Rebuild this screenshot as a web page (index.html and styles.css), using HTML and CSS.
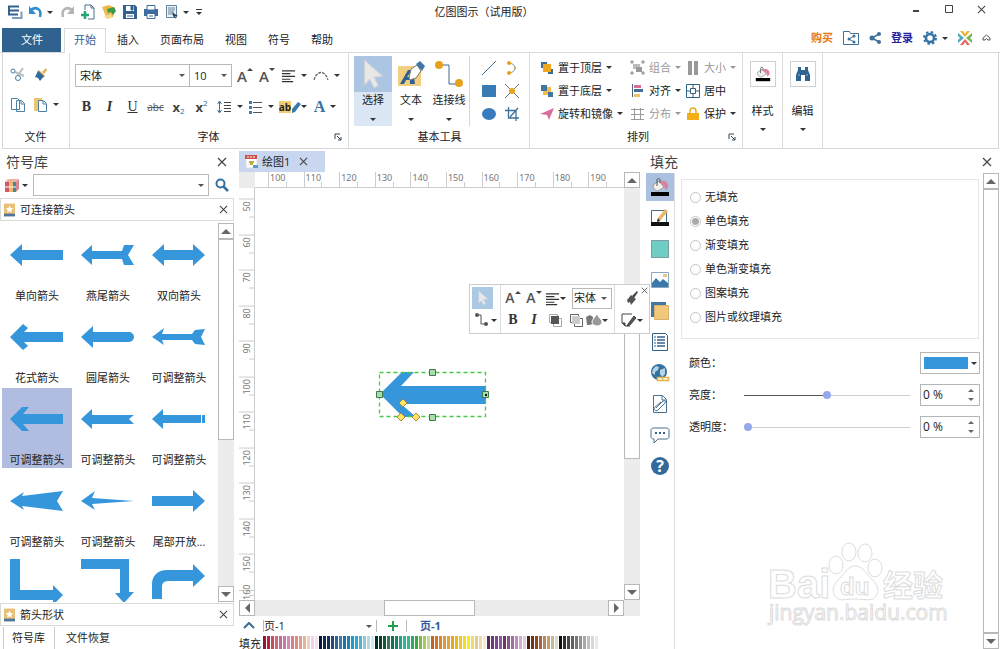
FILE: index.html
```
<!DOCTYPE html>
<html lang="zh-CN">
<head>
    <meta charset="UTF-8">
    <meta name="viewport" content="width=device-width, initial-scale=1.0">
    <title>亿图图示（试用版）</title>
    <link rel="stylesheet" href="styles.css">
</head>
<body>
    <svg class="sprite" aria-hidden="true">
        <symbol id="i-close" viewBox="0 0 10 10"><path d="M1 1l8 8M9 1L1 9" fill="none" stroke="#444" stroke-width="1.2"/></symbol>
        <symbol id="i-lines" viewBox="0 0 16 16"><path d="M1 3h14M1 6h9M1 9h14M1 12h9M1 14.500h12" stroke="#333" stroke-width="1.300"/></symbol>
        <symbol id="i-bucket" viewBox="0 0 20 20">
            <path d="M11 4c5-1 8 2 7 7l-3 2c0-3-1-5-4-6z" fill="#dc7fa0"/>
            <path d="M3 8l6-4 5 6-6 4c-3 0-5-3-5-6z" fill="#f2efec" stroke="#999"/>
            <path d="M7 9V3c0-2 3-2 3 0v3" fill="none" stroke="#555"/>
            <path d="M1 15h18v4H1z" fill="#000"/>
        </symbol>
        <symbol id="i-star" viewBox="0 0 12 14"><path d="M0 0h12v12H0z" fill="#e9c077"/><path d="M0 11h12v3H0z" fill="#4d7599"/><path d="M6 2l1.200 2.800 3 .2-2.300 2 .7 3L6 8.400 3.400 10l.7-3-2.300-2 3-.2z" fill="#fff"/></symbol>
        <symbol id="i-launch" viewBox="0 0 8 8"><path d="M1 6V1h5M3 3l4 4M7 4v3H4" fill="none" stroke="#345"/></symbol>
        <symbol id="i-pointer" viewBox="0 0 24 30"><path d="M4 2l17 15-8 1 4 8-4 2-4-8-5 5z" fill="#e8e8e8" stroke="#cfd3d8"/></symbol>
    </svg>

    <header class="titlebar">
        <div class="quick">
            <button aria-label="系统"><svg width="16" height="16" viewBox="0 0 16 16"><path d="M1 2.500h11M1 6.500h11M1 10.500h10M2 2v9" stroke="#33628f" stroke-width="2" fill="none"/><path d="M5 14h9.500V7.500" stroke="#7c9dbd" stroke-width="2" fill="none"/></svg></button>
            <button class="wide" aria-label="撤销"><svg width="16" height="16" viewBox="0 0 16 16"><path d="M3 6c5-4 11-1 9 7" fill="none" stroke="#2f8ecb" stroke-width="2.500"/><path d="M1 2v8h7z" fill="#2f8ecb"/></svg><i class="caret"></i></button>
            <button aria-label="恢复"><svg width="16" height="16" viewBox="0 0 16 16"><path d="M13 6C8 2 2 5 4 13" fill="none" stroke="#b5b5b5" stroke-width="2.500"/><path d="M15 2v8H8z" fill="#b5b5b5"/></svg></button>
            <button aria-label="新建"><svg width="16" height="16" viewBox="0 0 16 16"><path d="M5 6V1h6l3 3v11H8" fill="#fff" stroke="#4d6f8c"/><path d="M11 1v3h3" fill="none" stroke="#4d6f8c"/><path d="M5 7v8M1 11h8" stroke="#1fa774" stroke-width="2.500"/></svg></button>
            <button aria-label="打开"><svg width="16" height="16" viewBox="0 0 16 16"><path d="M1 3l7-2 6 3-2 9-6 2z" fill="#eeb84c"/><path d="M6 5l7-2 2 4-3 4-2-3-3 1z" fill="#3c9a48"/><path d="M3 12l7-2 1 3-5 2z" fill="#f7d98b"/></svg></button>
            <button aria-label="保存"><svg width="16" height="16" viewBox="0 0 16 16"><path d="M1 1h12l2 2v12H1z" fill="#33628f"/><path d="M4 2h8v5H4zM4 10h8v4H4z" fill="#fff"/><path d="M9 2h2v4H9zM5 12h6" fill="#33628f" stroke="#33628f"/></svg></button>
            <button aria-label="打印"><svg width="16" height="16" viewBox="0 0 16 16"><path d="M1 5h14v7H1z" fill="#3c6c9d"/><path d="M4 1.500h8V6H4zM4 9.500h8v5H4z" fill="#fff" stroke="#3c6c9d"/><path d="M6 12h4" stroke="#3c6c9d"/></svg></button>
            <button class="wide" aria-label="预览"><svg width="16" height="16" viewBox="0 0 16 16"><path d="M2.500 1.500h10v12h-10z" fill="#edf2f6" stroke="#64839c"/><path d="M4 4h7M4 6h7M4 8h6M4 10h4" stroke="#64839c"/><path d="M8 8l6 4-3 .5 1 2.500-3-3z" fill="#24476b"/></svg><i class="caret"></i></button>
            <button class="more" aria-label="更多"><i class="caret"></i></button>
        </div>
        <div class="title">亿图图示（试用版）</div>
        <div class="window-buttons">
            <button aria-label="最小化"><svg width="10" height="10" viewBox="0 0 10 10"><path d="M2 7h6" stroke="#444" stroke-width="2"/></svg></button>
            <button aria-label="最大化"><svg width="10" height="10" viewBox="0 0 10 10"><path d="M1.500 1.500h7v7h-7z" fill="none" stroke="#444"/></svg></button>
            <button aria-label="关闭"><svg width="9" height="9"><use href="#i-close"/></svg></button>
        </div>
    </header>

    <nav class="menu">
        <a class="file" href="#">文件</a>
        <a class="active" href="#">开始</a>
        <a href="#">插入</a>
        <a href="#">页面布局</a>
        <a href="#">视图</a>
        <a href="#">符号</a>
        <a href="#">帮助</a>
        <div class="account">
            <a class="buy" href="#">购买</a>
            <button aria-label="共享文件夹"><svg width="16" height="14" viewBox="0 0 16 14"><path d="M.5 13.500v-13h6l1 2h8v11z" fill="none" stroke="#3e7099"/><path d="M11 5L6 8l5 3" fill="none" stroke="#3e7099"/><g fill="#3e7099"><circle cx="11" cy="5" r="1.500"/><circle cx="6" cy="8" r="1.500"/><circle cx="11" cy="11" r="1.500"/></g></svg></button>
            <button aria-label="分享"><svg width="12" height="14" viewBox="0 0 12 14"><path d="M10 3L3 7l7 4" fill="none" stroke="#3e7099" stroke-width="1.500"/><g fill="#3e7099"><circle cx="10" cy="3" r="2"/><circle cx="3" cy="7" r="2.500"/><circle cx="10" cy="11" r="2"/></g></svg></button>
            <a class="login" href="#">登录</a>
            <button aria-label="设置"><svg width="14" height="14" viewBox="0 0 14 14"><circle cx="7" cy="7" r="4" fill="none" stroke="#3272a5" stroke-width="2.500"/><circle cx="7" cy="7" r="6" fill="none" stroke="#3272a5" stroke-width="2" stroke-dasharray="2.400 2.312"/></svg><i class="caret"></i></button>
            <button aria-label="主页"><svg width="14" height="14" viewBox="0 0 14 14"><path d="M2 0h3l2 3 2-3h3L7 6z" fill="#efaf2d"/><path d="M0 2l6 5-6 5V9l2-2-2-2z" fill="#53a7bd"/><path d="M14 2L8 7l6 5V9l-2-2 2-2z" fill="#78b64a"/><path d="M2 14l5-6 5 6H9l-2-3-2 3z" fill="#e8605a"/></svg></button>
            <button aria-label="收起"><svg width="9" height="8" viewBox="0 0 9 8"><path d="M1 4l3.500-3L8 4v2H6L4.500 4.500 3 6H1z" fill="none" stroke="#555"/></svg></button>
        </div>
    </nav>

    <section class="ribbon">
        <div class="group clipboard">
            <div class="clip-tools">
                <button aria-label="剪切"><svg width="16" height="16" viewBox="0 0 16 16"><path d="M5 6l9 4M8 9l5-7" stroke="#b4bdc4" stroke-width="2"/><circle cx="3" cy="5" r="2" fill="none" stroke="#4a7da5"/><circle cx="8" cy="12" r="2.500" fill="none" stroke="#4a7da5"/></svg></button>
                <button aria-label="格式刷"><svg width="16" height="16" viewBox="0 0 16 16"><path d="M9 6l4-4 1 2-3 4z" fill="#e4ae50"/><path d="M6 4l6 6-2 2-6-6z" fill="#dca543"/><path d="M5 5l6 5-4 5-2-3-3-1z" fill="#316ca0"/></svg></button>
                <button aria-label="复制"><svg width="16" height="16" viewBox="0 0 16 16"><path d="M1.500 1.500h6l2 2v9h-8zM6.500 3.500h5l3 3v8h-8z" fill="#fff" stroke="#4d80a3"/><path d="M11 4v3h3" fill="none" stroke="#4d80a3"/></svg></button>
                <button aria-label="粘贴"><svg width="16" height="16" viewBox="0 0 16 16"><path d="M1 1h8v13H1z" fill="#ecc474"/><path d="M5.500 3.500h5l3 3v8h-8z" fill="#fff" stroke="#4d80a3"/><path d="M10 4v3h3" fill="none" stroke="#4d80a3"/></svg><i class="caret"></i></button>
            </div>
            <h2>文件</h2>
        </div>

        <div class="group font">
            <div class="font-row">
                <span class="combo family"><select aria-label="字体"><option>宋体</option></select></span>
                <span class="combo size"><select aria-label="字号"><option>10</option></select></span>
                <button class="glyph" aria-label="增大字号">A<i class="up"></i></button>
                <button class="glyph" aria-label="减小字号">A<i class="down"></i></button>
                <button class="drop" aria-label="对齐"><svg width="15" height="15"><use href="#i-lines"/></svg><i class="caret"></i></button>
                <button class="drop" aria-label="曲线文字"><svg width="16" height="12" viewBox="0 0 16 12"><path d="M1 10C4 0 12 0 15 10" fill="none" stroke="#666" stroke-width="1.300" stroke-dasharray="3 1"/></svg><i class="caret"></i></button>
            </div>
            <div class="font-row second">
                <button class="serif"><b>B</b></button>
                <button class="serif"><b><em>I</em></b></button>
                <button class="serif"><u>U</u></button>
                <button class="strike"><s>abc</s></button>
                <button class="script"><b>x</b><sub>2</sub></button>
                <button class="script"><b>x</b><sup>2</sup></button>
                <button class="drop" aria-label="行距"><svg width="16" height="14" viewBox="0 0 16 14"><path d="M3.500 2v10M1.500 4l2-3 2 3M1.500 10l2 3 2-3" fill="none" stroke="#3f7198"/><path d="M8 2.500h7M8 5.500h7M8 8.500h7M8 11.500h7" stroke="#444"/></svg><i class="caret"></i></button>
                <button class="drop" aria-label="项目符号"><svg width="15" height="14" viewBox="0 0 15 14"><path d="M5 2.500h9M5 7.500h9M5 12.500h9" stroke="#555"/><path d="M1 1h3v3H1zM1 6h3v3H1zM1 11h3v3H1z" fill="#3f7ba9"/></svg><i class="caret"></i></button>
                <button class="drop mark" aria-label="突出显示"><span>ab</span><svg width="10" height="14" viewBox="0 0 10 14"><path d="M1 9l6-7 3 2-6 8-3 1z" fill="#3c78aa"/></svg><i class="caret"></i></button>
                <button class="drop serif color">A<i class="caret"></i></button>
            </div>
            <h2>字体</h2>
            <button class="launcher" aria-label="字体设置"><svg width="8" height="8"><use href="#i-launch"/></svg></button>
        </div>

        <div class="group tools">
            <div class="tool-row">
                <button class="big selected"><span class="pic"><svg width="30" height="32"><use href="#i-pointer"/></svg></span>选择<i class="caret"></i></button>
                <button class="big"><span class="pic"><svg width="27" height="27" viewBox="0 0 27 27"><path d="M0 5h23v20H0z" fill="#f2ce83"/><path d="M2 23L10 9h5l2 14h-5v-4H8l-2 4zM9 16h4l-1-4z" fill="#2d618f" fill-rule="evenodd"/><path d="M11 17l2-9 6-4 4 6-5 7-6 2z" fill="#fff" stroke="#777"/><path d="M18 3l4-3 5 5-3 5z" fill="#4178a5"/></svg></span>文本<i class="caret"></i></button>
                <button class="big"><span class="pic"><svg width="28" height="28" viewBox="0 0 28 28"><path d="M4 5h10v19h10" fill="none" stroke="#3b6b93"/><circle cx="4" cy="5" r="4" fill="#e8a11d"/><circle cx="24" cy="23" r="4" fill="#e8a11d"/></svg></span>连接线<i class="caret"></i></button>
                <div class="shapes">
                    <button aria-label="直线"><svg width="16" height="16" viewBox="0 0 16 16"><path d="M1 15L15 1" stroke="#47729a"/></svg></button>
                    <button aria-label="弧线"><svg width="16" height="16" viewBox="0 0 16 16"><path d="M5 3c8 1 8 9 0 10" fill="none" stroke="#63869f"/><circle cx="5" cy="3" r="2" fill="#e8a11d"/><circle cx="5" cy="13" r="2" fill="#e8a11d"/><circle cx="11" cy="8" r="1" fill="#e8a11d"/></svg></button>
                    <button aria-label="矩形"><svg width="16" height="16" viewBox="0 0 16 16"><path d="M1 2h14v12H1z" fill="#397bb3"/></svg></button>
                    <button aria-label="连接点"><svg width="16" height="16" viewBox="0 0 16 16"><path d="M1 1l14 14M15 1L1 15" stroke="#547995"/><circle cx="8" cy="8" r="3" fill="#e8a11d"/></svg></button>
                    <button aria-label="椭圆"><svg width="16" height="16" viewBox="0 0 16 16"><ellipse cx="8" cy="8" rx="7" ry="6" fill="#397bbf"/></svg></button>
                    <button aria-label="裁剪"><svg width="16" height="16" viewBox="0 0 16 16"><path d="M4.500 1v11H15M1 4.500h11V15M6 11l8-9" fill="none" stroke="#3e7199" stroke-width="1.300"/></svg></button>
                </div>
            </div>
            <h2>基本工具</h2>
        </div>

        <div class="group arrange">
            <div class="arrange-grid">
                <button><svg width="14" height="14" viewBox="0 0 14 14"><path d="M1 1h6v6H1zM8 8h5v5H8z" fill="#406b91"/><path d="M3 3h8v8H3z" fill="#f0a71c"/></svg>置于顶层<i class="caret"></i></button>
                <button class="off"><svg width="15" height="15" viewBox="0 0 15 15"><path d="M1 1h2v2H1zM12 1h2v2h-2zM1 12h2v2H1zM12 12h2v2h-2z" fill="none" stroke="#888"/><path d="M3 4h7v5H3z" fill="#bbb"/><path d="M6 7h6v5H6z" fill="#999"/></svg>组合<i class="caret"></i></button>
                <button class="off"><svg width="14" height="14" viewBox="0 0 14 14"><path d="M2 0h4v14H2zM8 0h4v14H8z" fill="#999"/></svg>大小<i class="caret"></i></button>
                <button><svg width="14" height="14" viewBox="0 0 14 14"><path d="M3 3h8v8H3z" fill="#f3bd4b"/><path d="M1 1h6v6H1zM8 8h5v5H8z" fill="#3e76a4"/></svg>置于底层<i class="caret"></i></button>
                <button><svg width="15" height="15" viewBox="0 0 15 15"><path d="M2.500 1v13" stroke="#446683"/><path d="M4 2h7v3H4z" fill="#dc6f99"/><path d="M4 6h9v3H4z" fill="#416f95"/><path d="M4 11h6v3H4z" fill="#efc167"/></svg>对齐<i class="caret"></i></button>
                <button><svg width="14" height="14" viewBox="0 0 14 14"><path d="M.5.5h13v13H.5zM4.500 4.500h5v5h-5zM7 1v3M7 10v3M1 7h3M10 7h3" fill="none" stroke="#2f6285"/></svg>居中</button>
                <button><svg width="14" height="14" viewBox="0 0 14 14"><path d="M0 7l14-6-5 12-2-5z" fill="#da6f9c"/></svg>旋转和镜像<i class="caret"></i></button>
                <button class="off"><svg width="15" height="14" viewBox="0 0 15 14"><path d="M1 2.500h13M1 7.500h13M1 12.500h13M4.500 1v12M10.500 1v12" stroke="#999" fill="none"/></svg>分布<i class="caret"></i></button>
                <button><svg width="14" height="14" viewBox="0 0 14 14"><path d="M4 7V4c0-4 6-4 6 0v3" fill="none" stroke="#e6a921" stroke-width="1.500"/><path d="M1 6h12v7H1z" fill="#f3ae17"/></svg>保护<i class="caret"></i></button>
            </div>
            <h2>排列</h2>
            <button class="launcher" aria-label="排列设置"><svg width="8" height="8"><use href="#i-launch"/></svg></button>
        </div>

        <button class="group tall"><span class="box"><svg width="18" height="16"><use href="#i-bucket"/></svg></span>样式<i class="caret"></i></button>
        <button class="group tall"><span class="box"><svg width="16" height="16" viewBox="0 0 16 16"><path d="M3 1h3v3h4V1h3v3l2 5v6h-5v-6H6v6H1V9l2-5z" fill="#2d6492"/><path d="M3 9h2M11 9h2" stroke="#9bb8ce"/></svg></span>编辑<i class="caret"></i></button>
    </section>

    <main>
        <aside class="library">
            <header class="panel-title"><h1>符号库</h1><button aria-label="关闭符号库"><svg width="10" height="10"><use href="#i-close"/></svg></button></header>
            <div class="search">
                <button aria-label="符号库列表"><svg width="14" height="15" viewBox="0 0 14 15"><path d="M0 4l3-3h11l-3 3z" fill="#efb0a0"/><path d="M0 4h4v10H0z" fill="#d0596a"/><path d="M4 4h4v10H4z" fill="#edbb62"/><path d="M8 4h3v10H8z" fill="#4b82aa"/><path d="M11 4l3-3v10l-3 3z" fill="#da8590"/><path d="M0 9h11" stroke="#fff"/></svg><i class="caret"></i></button>
                <span class="combo"><input type="text" aria-label="搜索符号"></span>
                <button aria-label="搜索"><svg width="14" height="14" viewBox="0 0 14 14"><circle cx="5.500" cy="5.500" r="4" fill="none" stroke="#34719f" stroke-width="2"/><path d="M8.500 8.500l4.500 4.500" stroke="#34719f" stroke-width="2.500"/></svg></button>
            </div>
            <div class="section"><svg width="11" height="14"><use href="#i-star"/></svg><span>可连接箭头</span><button aria-label="关闭可连接箭头"><svg width="9" height="9"><use href="#i-close"/></svg></button></div>
            <div class="shelf">
                <div class="symbols">
                    <button><svg viewBox="0 -17 54 60"><path d="M0 14L12 3v6h41v10H12v6z"/></svg>单向箭头</button>
                    <button><svg viewBox="0 -17 54 60"><path d="M0 14L11 4v6h30l2-6h10l-6 10 6 10H43l-2-6H11v6z"/></svg>燕尾箭头</button>
                    <button><svg viewBox="0 -17 54 60"><path d="M0 14L12 3v6h29V3l12 11-12 11v-6H12v6z"/></svg>双向箭头</button>
                    <button><svg viewBox="0 -17 54 60"><path d="M0 14L13 1l5 4-4 4h39v10H14l4 4-5 4z"/></svg>花式箭头</button>
                    <button><svg viewBox="0 -17 54 60"><path d="M0 14L12 3v6h36a5 5 0 0 1 0 10H12v6z"/></svg>圆尾箭头</button>
                    <button><svg viewBox="0 -17 54 60"><path d="M0 14l12-9-2 6h30l3-4 10-1-4 8 4 8-10-1-3-4H10l2 5z"/></svg>可调整箭头</button>
                    <button class="selected"><svg viewBox="0 -17 54 60"><path d="M0 14L12 2h7l-6 7h40v10H13l6 7h-7z"/></svg>可调整箭头</button>
                    <button><svg viewBox="0 -17 54 60"><path d="M0 14L11 4v6h42l-5 4 5 5H11v5z"/></svg>可调整箭头</button>
                    <button><svg viewBox="0 -17 54 60"><path d="M0 14L11 4v6h38v8H11v6zM50 10h3v8h-3z"/></svg>可调整箭头</button>
                    <button><svg viewBox="0 -17 54 60"><path d="M0 14L14 5l-2 4 41-5-6 10 6 10-41-5 2 4z"/></svg>可调整箭头</button>
                    <button><svg viewBox="0 -17 54 60"><path d="M0 14L14 4l-3 7 42 3-42 3 3 6z"/></svg>可调整箭头</button>
                    <button><svg viewBox="0 -17 54 60"><path d="M0 9h41V3l12 11-12 11v-6H0z"/></svg>尾部开放...</button>
                    <button aria-label="直角箭头"><svg viewBox="0 -17 54 60"><path d="M0-10h10v31h33v-5l10 10-10 10v-5H0z"/></svg></button>
                    <button aria-label="下折箭头"><svg viewBox="0 -17 54 60"><path d="M0-10h48v33h5L43 34 34 24h5V0H0z"/></svg></button>
                    <button aria-label="圆角箭头"><svg viewBox="0 -17 54 60"><path d="M0 30V14C1 5 7 1 15 1h26v-6L53 7 41 18v-6H17c-5 0-7 2-7 6v12z"/></svg></button>
                </div>
                <div class="vbar lib-bar"><button aria-label="上"><i class="tri t-up"></i></button><span></span><button aria-label="下"><i class="tri t-down"></i></button></div>
            </div>
            <div class="section"><svg width="11" height="14"><use href="#i-star"/></svg><span>箭头形状</span><button aria-label="关闭箭头形状"><svg width="9" height="9"><use href="#i-close"/></svg></button></div>
            <div class="lib-tabs"><a class="on" href="#">符号库</a><a href="#">文件恢复</a></div>
        </aside>

        <section class="editor">
            <div class="doc-tabs">
                <div class="doc-tab"><svg width="14" height="14" viewBox="0 0 14 14"><path d="M1 1h11v12H1z" fill="#fff" stroke="#ddd"/><path d="M0 0h12v4H0z" fill="#c9504c"/><path d="M2 2h2M5 2h2M8 2h2" stroke="#fff"/><path d="M4 6h5v2H8v2H5V8H4z" fill="#c1ad3f"/><path d="M8 10h5v3H8z" fill="#579bc7"/></svg><span>绘图1</span><button aria-label="关闭绘图"><svg width="9" height="9"><use href="#i-close"/></svg></button></div>
            </div>
            <div class="stage">
                <div class="corner"></div>
                <div class="ruler-h" id="ruler-h"></div>
                <div class="ruler-v" id="ruler-v"></div>
                <div class="canvas">
                    <svg class="shape" width="116" height="54" viewBox="0 0 116 54">
                        <path d="M5 26L27 4h12L26 18h85v18H26l15 13H28z" fill="#3596dc"/>
                        <path d="M4.500 4.500h106v44H4.500z" fill="none" stroke="#48c848" stroke-width="1.300" stroke-dasharray="4 3"/>
                        <g fill="#a6dcb0" stroke="#3f7a4c"><path d="M1.500 23.500h6v6h-6zM54.500 1.500h6v6h-6zM54.500 46.500h6v6h-6zM107.500 23.500h6v6h-6z"/></g>
                        <path d="M110 26h2v2h-2z" fill="#111"/>
                        <path d="M28 31l4 4-4 4-4-4zM26 45l4 4-4 4-4-4zM41 45l4 4-4 4-4-4z" fill="#ffe36b" stroke="#a8892f"/>
                    </svg>
                </div>
                <div class="vbar page-bar"><button aria-label="上"><i class="tri t-up"></i></button><span></span><button aria-label="下"><i class="tri t-down"></i></button></div>
                <div class="hbar"><button aria-label="左"><i class="tri t-left"></i></button><span></span><button aria-label="右"><i class="tri t-right"></i></button></div>
            </div>
            <div class="pages">
                <button aria-label="展开"><svg width="12" height="8" viewBox="0 0 12 8"><path d="M1 6l5-5 5 5" fill="none" stroke="#356b96" stroke-width="2"/></svg></button>
                <span class="combo"><select aria-label="页面"><option>页-1</option></select></span>
                <button class="add" aria-label="添加页面"><svg width="12" height="12" viewBox="0 0 12 12"><path d="M6 1v10M1 6h10" stroke="#1ca052" stroke-width="2"/></svg></button>
                <a href="#">页-1</a>
            </div>
            <div class="palette"><span>填充</span><div class="swatches" id="swatches"></div></div>

            <div class="floating">
                <div class="f-col">
                    <button class="on" aria-label="选择"><svg width="14" height="16"><use href="#i-pointer"/></svg></button>
                    <button aria-label="连接线"><svg width="16" height="14" viewBox="0 0 16 14"><path d="M3 2h4v9h5" fill="none" stroke="#555"/><circle cx="3" cy="2" r="2" fill="#555"/><circle cx="12" cy="11" r="2" fill="#555"/></svg><i class="caret"></i></button>
                </div>
                <div class="f-col mid">
                    <div>
                        <button class="glyph" aria-label="增大字号">A<i class="up"></i></button>
                        <button class="glyph" aria-label="减小字号">A<i class="down"></i></button>
                        <button aria-label="对齐"><svg width="15" height="15"><use href="#i-lines"/></svg><i class="caret"></i></button>
                        <span class="combo"><select aria-label="字体"><option>宋体</option></select></span>
                    </div>
                    <div>
                        <button class="serif"><b>B</b></button>
                        <button class="serif"><b><em>I</em></b></button>
                        <button aria-label="置于顶层"><svg width="14" height="14" viewBox="0 0 14 14"><path d="M1.500 1.500h8v8h-8zM5.500 5.500h8v8h-8z" fill="#fff" stroke="#aaa"/><path d="M3 3h8v8H3z" fill="#555"/></svg></button>
                        <button aria-label="置于底层"><svg width="14" height="14" viewBox="0 0 14 14"><path d="M1.500 1.500h8v8h-8zM5.500 5.500h8v8h-8z" fill="#fff" stroke="#666"/><path d="M3 3h8v8H3z" fill="#ccc"/></svg></button>
                        <button aria-label="填充"><svg width="16" height="14" viewBox="0 0 16 14"><path d="M0 4l4-2 3 2v7l-4 1H1z" fill="#777"/><path d="M11 1c3 5 5 6 5 8s-2 4-5 4-5-2-5-4 2-4 5-8z" fill="#999" stroke="#fff"/></svg><i class="caret"></i></button>
                    </div>
                </div>
                <div class="f-col">
                    <button aria-label="格式刷"><svg width="14" height="14" viewBox="0 0 14 14"><path d="M7 5l5-5 1 1-4 6z" fill="#444"/><path d="M6 4l5 4-5 6-1-3-2 1-1-3z" fill="#555"/></svg></button>
                    <button aria-label="线条"><svg width="15" height="14" viewBox="0 0 15 14"><path d="M11 1H1v9l3 3h5" fill="none" stroke="#444"/><path d="M1 10h3v3M13 3l-6 8-1 2 3-1 6-7z" fill="#555" stroke="#444"/></svg><i class="caret"></i></button>
                </div>
                <button class="f-close" aria-label="关闭工具栏"><svg width="7" height="7"><use href="#i-close"/></svg></button>
            </div>
        </section>

        <aside class="props">
            <header class="panel-title"><h1>填充</h1><button aria-label="关闭填充"><svg width="10" height="10"><use href="#i-close"/></svg></button></header>
            <div class="props-body">
                <div class="strip">
                    <button class="on" aria-label="填充"><svg width="20" height="20"><use href="#i-bucket"/></svg></button>
                    <button aria-label="线条"><svg width="20" height="20" viewBox="0 0 20 20"><path d="M1.500 2.500h15v12h-15z" fill="#fff" stroke="#446a8a"/><path d="M15 1l3 2-8 10-3 1 1-4z" fill="#e7b965"/><path d="M8 10l2 3-3 1z" fill="#222"/><path d="M1 14h18v4H1z" fill="#111"/></svg></button>
                    <button aria-label="阴影"><svg width="20" height="20" viewBox="0 0 20 20"><path d="M1.500 1.500h17v17h-17z" fill="#70cdc3" stroke="#7b9ca0"/></svg></button>
                    <button aria-label="图片"><svg width="20" height="20" viewBox="0 0 20 20"><path d="M1.500 2.500h17v15h-17z" fill="#fff" stroke="#8aa7be"/><path d="M2 13l4-5 4 4 3-3 5 4v4H2z" fill="#3b78ab"/><path d="M13 4h4v3h-4z" fill="#e9c68f"/></svg></button>
                    <button aria-label="图层"><svg width="20" height="20" viewBox="0 0 20 20"><path d="M1 1h15v15H1z" fill="#4276a4"/><path d="M4.500 4.500h14v14h-14z" fill="#f1c77a" stroke="#d7b06b"/></svg></button>
                    <button aria-label="属性"><svg width="20" height="20" viewBox="0 0 20 20"><path d="M2.500 1.500h13l2 2v15h-15z" fill="#fff" stroke="#34638a"/><path d="M7 5h8M7 8h8M7 11h8M7 14h8" stroke="#34638a" stroke-width="1.500"/><path d="M4 5h2M4 8h2M4 11h2M4 14h2" stroke="#34638a"/></svg></button>
                    <button aria-label="超链接"><svg width="20" height="20" viewBox="0 0 20 20"><circle cx="9" cy="9" r="8" fill="#33719f"/><path d="M3 6l3-3 3 1-1 3-3 2v3l-3-2zM10 7l5-2v6l-3 3-2-3z" fill="#b7d4e7"/><path d="M7.500 14.500h5v3h-5zM12.500 14.500h6v3h-6z" fill="#fff" stroke="#e4b34b" stroke-width="1.500"/></svg></button>
                    <button aria-label="附件"><svg width="20" height="20" viewBox="0 0 20 20"><path d="M3.500 1.500h9l4 4v13h-13z" fill="#fff" stroke="#48728f"/><path d="M12 2v4h4M6 14l7-7c2-1 3 1 2 2l-7 7c-3 2-5-1-3-3l6-5" fill="none" stroke="#48728f"/></svg></button>
                    <button aria-label="注释"><svg width="20" height="20" viewBox="0 0 20 20"><path d="M4 3h12c2 0 3 1 3 2v7c0 1-1 2-3 2H8l-4 4v-4c-2 0-3-1-3-2V5c0-1 1-2 3-2z" fill="#fff" stroke="#48728f"/><path d="M5 8h2M9 8h2M13 8h2" stroke="#34638a" stroke-width="2"/></svg></button>
                    <button aria-label="帮助"><svg width="20" height="20" viewBox="0 0 20 20"><circle cx="10" cy="10" r="9" fill="#33699b"/><text x="10" y="16" text-anchor="middle" font-family="Open Sans" font-weight="bold" font-size="16" fill="#fff">?</text></svg></button>
                </div>
                <form class="fill-form">
                    <fieldset>
                        <label><input type="radio" name="fill">无填充</label>
                        <label><input type="radio" name="fill" checked>单色填充</label>
                        <label><input type="radio" name="fill">渐变填充</label>
                        <label><input type="radio" name="fill">单色渐变填充</label>
                        <label><input type="radio" name="fill">图案填充</label>
                        <label><input type="radio" name="fill">图片或纹理填充</label>
                    </fieldset>
                    <div class="field"><label for="color">颜色：</label><button type="button" id="color" class="color-pick"><span></span><i class="caret"></i></button></div>
                    <div class="field"><label for="light">亮度：</label><input type="range" id="light" class="half" min="-100" max="100" value="0"><span class="spin"><input type="text" aria-label="亮度值" value="0 %"><span><i class="tri t-up"></i><i class="tri t-down"></i></span></span></div>
                    <div class="field"><label for="alpha">透明度：</label><input type="range" id="alpha" min="0" max="100" value="0"><span class="spin"><input type="text" aria-label="透明度值" value="0 %"><span><i class="tri t-up"></i><i class="tri t-down"></i></span></span></div>
                    <svg class="logo" width="182" height="90" viewBox="0 0 182 90">
                        <g fill="#fff" stroke="#dcdcdc">
                            <text x="1" y="57" font-family="Liberation Sans" font-weight="bold" font-size="40">Bai</text>
                            <ellipse cx="69" cy="24" rx="7" ry="9"/><ellipse cx="82" cy="11" rx="7" ry="9"/><ellipse cx="98" cy="12" rx="7" ry="9"/><ellipse cx="108" cy="27" rx="7" ry="9"/>
                            <path d="M88 25c7 0 10 6 16 12s9 12 5 18-11 3-21 3-16 3-20-3-1-12 5-18 8-12 15-12z"/>
                            <text x="73" y="54" font-family="Liberation Sans" font-weight="bold" font-size="24">du</text>
                            <text x="116" y="55" font-family="Noto Sans CJK SC" font-weight="bold" font-size="30">经验</text>
                            <text x="2" y="79" font-family="Open Sans" font-size="21">jingyan.baidu.com</text>
                        </g>
                    </svg>
                </form>
                <div class="vbar props-bar"><button aria-label="上"><i class="tri t-up"></i></button><span></span><button aria-label="下"><i class="tri t-down"></i></button></div>
            </div>
        </aside>
    </main>
    <script src="script.js"></script>
</body>
</html>
```
FILE: styles.css
```
* {
    box-sizing: border-box;
}

body {
    margin: 0;
    height: 100vh;
    display: flex;
    flex-direction: column;
    overflow: hidden;
    background: #fff;
    color: #222;
    font-family: "Open Sans", "Noto Sans CJK SC", sans-serif;
    font-size: 11px;
    line-height: 16px;
}

button, input, select {
    font: inherit;
    color: inherit;
    margin: 0;
    padding: 0;
    border: 0;
    background: none;
}

button {
    display: flex;
    align-items: center;
    justify-content: center;
    white-space: nowrap;
}

svg {
    flex: none;
    display: block;
}

a {
    color: inherit;
    text-decoration: none;
}

h1, h2 {
    margin: 0;
    font-weight: normal;
}

.sprite {
    position: absolute;
    width: 0;
    height: 0;
}

.caret {
    flex: none;
    border: 3px solid transparent;
    border-top-color: #333;
    border-bottom: 0;
}

.tri {
    border: 5px solid transparent;
}

.t-up {
    border-bottom-color: #666;
    border-top: 0;
}

.t-down {
    border-top-color: #666;
    border-bottom: 0;
}

.t-left {
    border-right-color: #666;
    border-left: 0;
}

.t-right {
    border-left-color: #666;
    border-right: 0;
}

/* drop-down and text boxes */
.combo {
    display: flex;
    align-items: center;
    border: 1px solid #b9b9b9;
    background: #fff;
}

.combo::after {
    content: "";
    border: 3px solid transparent;
    border-top-color: #555;
    border-bottom: 0;
    margin-right: 4px;
}

.combo select, .combo input {
    appearance: none;
    flex: 1;
    min-width: 0;
    padding-left: 4px;
    outline: 0;
}

/* title bar */
.titlebar {
    display: grid;
    grid-template-columns: 1fr auto 1fr;
    align-items: center;
    height: 24px;
    padding: 0 14px 0 4px;
}

.quick, .window-buttons {
    display: flex;
    align-items: center;
}

.quick button {
    width: 21px;
}

.quick .wide {
    width: 31px;
    gap: 3px;
}

.quick .more {
    width: 14px;
    padding-top: 3px;
}

.more .caret {
    box-shadow: 0 -2px 0 #fff, 0 -3px 0 #333;
}

.title {
    margin-right: 22px;
}

.window-buttons {
    justify-content: flex-end;
    gap: 23px;
    padding-bottom: 6px;
}

/* menu tabs */
.menu {
    display: flex;
    height: 25px;
    padding-left: 2px;
    border-bottom: 1px solid #dadada;
    margin-top: 4px;
    flex: none;
}

.menu > a {
    padding: 4px 10px 0 11px;
}

.menu .file {
    background: #2f628f;
    color: #fff;
    width: 59px;
    text-align: center;
    margin-right: 3px;
}

.menu .active {
    border: 1px solid #dadada;
    border-bottom: 0;
    background: #fff;
    color: #2f628f;
    margin-bottom: -1px;
    padding: 3px 9px 0;
}

.account {
    display: flex;
    align-items: center;
    gap: 10px;
    margin-left: auto;
    padding: 0 9px 4px 0;
}

.account button {
    gap: 5px;
}

.buy {
    color: #e57716;
    font-weight: bold;
}

.login {
    color: #2222a0;
    font-weight: bold;
}

/* ribbon */
.ribbon {
    display: flex;
    height: 96px;
    flex: none;
    margin: 0 1px 0 2px;
    border: 1px solid #d6d6d6;
    border-top: 0;
}

.group {
    position: relative;
    display: flex;
    flex-direction: column;
    border-right: 1px solid #dcdcdc;
    padding: 3px 6px 0;
}

.clipboard, .font {
    padding-left: 5px;
}

.group h2 {
    margin-top: auto;
    padding-bottom: 3px;
    text-align: center;
    font-size: 11px;
}

.launcher {
    position: absolute;
    right: 6px;
    bottom: 7px;
}

.clip-tools {
    display: grid;
    grid-template-columns: 23px 32px;
    grid-auto-rows: 31px;
    padding-top: 2px;
}

.clip-tools button {
    justify-content: flex-start;
    padding-left: 2px;
    gap: 4px;
}

.font-row {
    display: flex;
    align-items: center;
    height: 23px;
    margin-top: 8px;
}

.font-row .family {
    width: 115px;
    height: 23px;
}

.font-row .size {
    width: 43px;
    height: 23px;
    margin: 0 2px 0 -1px;
}

.second button {
    width: 23px;
}

.glyph {
    width: 22px;
    font-family: "Open Sans", sans-serif;
    font-size: 15px;
    font-weight: 600;
    color: #555;
}

.glyph i {
    border: 3px solid transparent;
    margin-bottom: 12px;
}

.glyph .up {
    border-bottom-color: #444;
    border-top: 0;
}

.glyph .down {
    border-top-color: #444;
    border-bottom: 0;
}

.font-row .drop {
    width: 32px;
    gap: 5px;
}

.serif {
    font-family: "Liberation Serif", serif;
    font-size: 14px;
    color: #333;
}

.strike {
    font-size: 10px;
    color: #555;
}

.script {
    font-size: 13px;
    color: #444;
}

.script sub, .script sup {
    font-size: 8px;
    line-height: 8px;
    color: #2f6c9c;
}

.script sub {
    padding-top: 8px;
}

.script sup {
    padding-bottom: 8px;
}

.mark span {
    background: #f3cb72;
    font-size: 10px;
    font-weight: bold;
    line-height: 12px;
}

.font-row .mark {
    gap: 0;
}

.font-row .color {
    font-size: 16px;
    font-weight: bold;
    color: #376fa0;
}

.tool-row {
    display: flex;
}

.tools {
    width: 181px;
    padding: 3px 4px 0 5px;
}

.big {
    flex-direction: column;
    justify-content: flex-start;
    width: 38px;
    height: 70px;
}

.big .pic {
    display: flex;
    align-items: center;
    justify-content: center;
    width: 100%;
    height: 36px;
}

.big .caret {
    margin-top: 10px;
}

.selected.big {
    background: #dbe7f5;
}

.selected .pic {
    background: #abc5e2;
}

.shapes {
    display: grid;
    grid-template-columns: 23px 23px;
    grid-template-rows: repeat(3, 23px);
    margin-left: 1px;
    padding-left: 7px;
    border-left: 1px solid #d6d6d6;
}

.arrange {
    width: 213px;
    padding-left: 10px;
}

.arrange-grid {
    display: grid;
    grid-template-columns: 90px 56px auto;
    grid-auto-rows: 23px;
}

.arrange-grid button {
    justify-content: flex-start;
    gap: 4px;
}

.arrange-grid .off {
    color: #999;
}

.off .caret {
    border-top-color: #999;
}

.tall {
    width: 40px;
    align-items: center;
    justify-content: flex-start;
    padding: 8px 0 0;
}

.tall .box {
    display: flex;
    align-items: center;
    justify-content: center;
    width: 26px;
    height: 26px;
    border: 1px solid #d0d0d0;
    margin-bottom: 16px;
}

.tall .caret {
    margin-top: 9px;
}

/* work area */
main {
    flex: 1;
    min-height: 0;
    display: grid;
    grid-template-columns: 236px minmax(0, 1fr) 36%;
}

.panel-title {
    display: flex;
    align-items: center;
    justify-content: space-between;
    height: 24px;
    padding: 2px 8px 0 6px;
    flex: none;
}

.panel-title h1 {
    font-size: 14px;
    line-height: 20px;
    color: #444;
}

.library {
    display: flex;
    flex-direction: column;
    min-height: 0;
    padding-right: 1px;
}

.search {
    display: flex;
    align-items: center;
    height: 24px;
    padding: 0 6px 0 5px;
}

.search button {
    gap: 3px;
}

.search .combo {
    flex: 1;
    height: 22px;
    margin: 0 6px 0 5px;
}

.section {
    display: flex;
    align-items: center;
    flex: none;
    height: 23px;
    margin: 1px 1px 1px 0;
    padding: 0 5px 0 3px;
    border: 1px solid #d8dcd4;
}

.section span {
    flex: 1;
    padding-left: 5px;
}

.shelf {
    flex: 1;
    min-height: 0;
    display: flex;
    padding: 1px 1px 0 2px;
}

.symbols {
    flex: 1;
    display: grid;
    grid-template-columns: repeat(3, 70px);
    grid-auto-rows: 80px;
    gap: 2px 1px;
    padding-top: 1px;
    overflow: hidden;
}

.symbols button {
    flex-direction: column;
    justify-content: flex-start;
}

.symbols svg {
    width: 54px;
    height: 60px;
    margin-bottom: 4px;
    fill: #3596dc;
}

.symbols .selected {
    background: #b0bde0;
}

.lib-tabs {
    display: flex;
    flex: none;
    height: 22px;
    padding-left: 3px;
}

.lib-tabs a {
    padding: 3px 11px 0;
}

.lib-tabs .on {
    border: 1px solid #ccc;
    border-width: 0 1px;
    padding: 3px 9px 0 8px;
}

/* scroll bars */
.vbar, .hbar {
    display: grid;
    background: #ececec;
}

.vbar {
    width: 16px;
}

.vbar button, .vbar span, .hbar button, .hbar span {
    border: 1px solid #b8b8b8;
    background: #fff;
}

.lib-bar {
    grid-template-rows: 16px 200fr 145fr 16px;
}

.lib-bar button:last-child, .page-bar button:last-child {
    grid-row: -2;
}

.page-bar {
    grid-column: 3;
    grid-row: 1 / 3;
    grid-template-rows: 16px 100fr 171fr 125fr 16px;
}

.page-bar span {
    grid-row: 3;
}

.props-bar {
    grid-template-rows: 16px 1fr 16px;
}

.hbar {
    grid-column: 1 / 4;
    grid-template-columns: 16px 129fr 92fr 133fr 16px 16px;
}

.hbar span {
    grid-column: 3;
}

.hbar button:last-child {
    grid-column: 5;
}

/* editor */
.editor {
    position: relative;
    display: flex;
    flex-direction: column;
    min-height: 0;
    padding: 2px 0 0 3px;
}

.doc-tabs {
    height: 21px;
    flex: none;
    display: flex;
}

.doc-tab {
    display: flex;
    align-items: center;
    gap: 3px;
    width: 86px;
    padding-left: 6px;
    background: #c8d7ef;
}

.doc-tab button {
    margin-left: 6px;
}

.stage {
    flex: 1;
    min-height: 0;
    display: grid;
    grid-template-columns: 16px minmax(0, 1fr) 16px;
    grid-template-rows: 16px minmax(0, 1fr) 16px;
}

.corner {
    background: #ececec;
}

.ruler-h, .ruler-v {
    font-family: "Noto Sans", sans-serif;
    font-size: 9px;
    line-height: 10px;
    color: #777;
}

.ruler-h {
    display: flex;
    padding-left: 13px;
    border-bottom: 1px solid #ccc;
    overflow: hidden;
}

.ruler-h span {
    flex: 1;
    padding: 1px 0 0 1px;
    border-left: 1px solid #ccc;
    background: linear-gradient(#ccc, #ccc) 50% 100% / 1px 5px no-repeat;
}

.ruler-v {
    display: grid;
    grid-template-rows: repeat(11, 1fr) 10px;
    padding-top: 11px;
    border-right: 1px solid #ccc;
    overflow: hidden;
}

.ruler-v span {
    min-height: 0;
    writing-mode: vertical-rl;
    transform: rotate(180deg);
    text-align: right;
    padding: 0 3px 1px 0;
    border-bottom: 1px solid #ccc;
    background: linear-gradient(#ccc, #ccc) 0 50% / 5px 1px no-repeat;
}

.canvas {
    position: relative;
    overflow: hidden;
}

.shape {
    position: absolute;
    left: 120px;
    top: 180px;
}

.pages {
    display: flex;
    align-items: center;
    flex: none;
    height: 20px;
    padding-left: 4px;
}

.pages .combo {
    width: 114px;
    height: 12px;
    margin: 0 3px 0 8px;
    border-width: 0 1px;
}

.pages .combo select {
    padding-left: 0;
}

.pages .add {
    padding: 0 7px;
    border-right: 1px solid #bbb;
}

.pages a {
    margin-left: 13px;
    color: #31589c;
    font-weight: bold;
}

.palette {
    display: flex;
    flex: none;
    height: 13px;
    overflow: hidden;
}

.palette > span {
    width: 24px;
    line-height: 15px;
}

.swatches {
    display: flex;
}

.swatches i {
    width: 4px;
    border-right: 1px solid #fff;
}

/* floating format bar lies over the canvas */
.floating {
    position: absolute;
    left: 233px;
    top: 135px;
    z-index: 2;
    display: flex;
    height: 50px;
    border: 1px solid #ccc;
    background: #fff;
}

.f-col {
    display: flex;
    flex-direction: column;
    width: 30px;
    height: 48px;
    padding: 2px;
}

.f-col > button, .f-col > div {
    height: 22px;
    gap: 1px;
}

.f-col .on {
    width: 21px;
    background: #abc8e5;
}

.f-col.mid {
    width: 115px;
    border: 1px solid #ddd;
    border-width: 0 1px;
}

.f-col > div {
    display: flex;
    align-items: center;
}

.mid button {
    width: 20px;
    flex: none;
}

.mid .glyph {
    font-size: 14px;
}

.mid .combo {
    width: 40px;
    height: 21px;
    margin-left: 6px;
}

.mid .combo select {
    padding-left: 1px;
}

.f-col + .f-col:not(.mid) {
    width: 34px;
}

.f-close {
    position: absolute;
    top: 2px;
    right: 1px;
}

/* fill panel */
.props {
    display: flex;
    flex-direction: column;
    min-height: 0;
}

.props .panel-title {
    padding: 2px 8px 0 10px;
}

.props-body {
    flex: 1;
    min-height: 0;
    display: flex;
    padding-right: 1px;
}

.strip {
    width: 35px;
    padding-left: 6px;
    border-right: 1px solid #ddd;
}

.strip button {
    width: 28px;
    height: 28px;
    margin-bottom: 3px;
}

.strip .on {
    background: #abc1df;
}

.fill-form {
    flex: 1;
    min-width: 0;
    display: flex;
    flex-direction: column;
    padding: 6px 3px 18px 6px;
}

fieldset {
    margin: 0 1px 8px 0;
    padding: 5px 8px;
    border: 1px solid #e6e6e6;
    height: 160px;
}

fieldset label {
    display: flex;
    align-items: center;
    gap: 4px;
    height: 24px;
}

input[type=radio] {
    appearance: none;
    width: 11px;
    height: 11px;
    border: 1px solid #c4c4c4;
    border-radius: 50%;
}

input[type=radio]:checked {
    background: radial-gradient(#aaa 0 3px, #fff 4px);
}

.field {
    display: flex;
    align-items: center;
    height: 32px;
    padding-left: 8px;
}

.field > label {
    width: 52px;
}

.color-pick {
    width: 60px;
    height: 22px;
    margin-left: auto;
    gap: 3px;
    border: 1px solid #b5b5b5;
}

.color-pick span {
    width: 44px;
    height: 12px;
    background: #3596dc;
}

input[type=range] {
    appearance: none;
    flex: 1;
    min-width: 0;
    height: 10px;
    margin: 0 10px 0 3px;
    background: linear-gradient(#ccc, #ccc) 50% / 100% 1px no-repeat;
}

input.half[type=range] {
    background: linear-gradient(90deg, #555 50%, #ccc 50%) 50% / 100% 1px no-repeat;
}

input[type=range]::-webkit-slider-thumb {
    appearance: none;
    width: 8px;
    height: 8px;
    border-radius: 50%;
    background: #94a9e8;
}

.spin {
    display: flex;
    align-items: center;
    width: 60px;
    height: 22px;
    padding: 0 5px 0 2px;
    border: 1px solid #b5b5b5;
}

.spin input {
    flex: 1;
    min-width: 0;
    font-size: 12px;
}

.spin span {
    display: grid;
    gap: 6px;
}

.spin .tri {
    border-left-width: 3px;
    border-right-width: 3px;
}

.spin .t-up {
    border-bottom-width: 3px;
}

.spin .t-down {
    border-top-width: 3px;
}

.logo {
    margin-top: auto;
    margin-left: 86px;
}
```
FILE: script.js
```
const colors = [
    '#9c1230', '#b8203c', '#c84c5c', '#cc6878', '#c46c90', '#c878ac', '#d08cb4', '#d88088', '#e08c80', '#e49c88', '#e4b498', '#ecd0c8', '#f0d4e4', '#f4e2ee',
    '#081838', '#102850', '#18305c', '#204c7c', '#306494', '#3c7cac', '#1c70ac', '#1884bc', '#209cc8', '#2ca8cc', '#50b4cc', '#8cc8d8', '#b4d8e4', '#d4e8f0',
    '#003028', '#084030', '#105840', '#387858', '#187050', '#108868', '#28a084', '#30b49c', '#38b890', '#30a860', '#38a840', '#80b850', '#a8c860', '#c8d898',
    '#c86020', '#d07424', '#d88828', '#e0983c', '#e0a440', '#e4a820', '#e8b820', '#f0c828', '#f4dc20', '#f4ec20', '#ecdc68', '#e4cc88', '#ecdca8', '#f4ecd0',
    '#582858', '#703878', '#7c4890', '#8c58a0', '#703468', '#885488', '#a070a4', '#b890b8', '#d0b0d0', '#e8c8dc',
    '#482010', '#703418', '#8c4820', '#a8643c', '#b88858', '#c0a070', '#c8b898', '#dcdccc',
    '#101010', '#303030', '#484848', '#606060', '#787878', '#909090', '#a8a8a8', '#c0c0c0', '#d8d8d8', '#eaeaea'
];

function addTicks(id, from, to) {
    const ruler = document.getElementById(id);
    for (let n = from; n <= to; n += 10) {
        const tick = document.createElement('span');
        tick.textContent = n;
        ruler.appendChild(tick);
    }
}

addTicks('ruler-h', 100, 190);
addTicks('ruler-v', 50, 160);

const swatches = document.getElementById('swatches');
colors.forEach((color) => {
    const swatch = document.createElement('i');
    swatch.style.backgroundColor = color;
    swatches.appendChild(swatch);
});
```
